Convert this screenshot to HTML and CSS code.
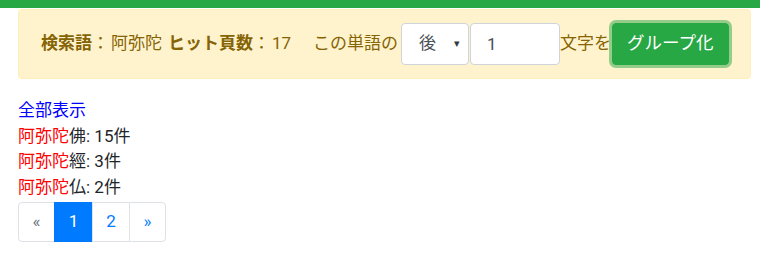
FILE: index.html
```html
<!DOCTYPE html>
<html lang="ja">
<head>
    <meta charset="UTF-8">
    <meta name="viewport" content="width=device-width, initial-scale=1.0">
    <title>検索結果</title>
    <link rel="stylesheet" href="styles.css">
</head>
<body>
    <div class="topbar"></div>

    <div class="container">
        <div class="alert">
            <b>検索語</b><span class="sep">：</span>阿弥陀
            <b class="gap-left">ヒット頁数</b><span class="sep">：</span>17
            <span class="phrase">この単語の</span>
            <div class="select">
                <span>後</span>
                <span class="caret">&#9662;</span>
            </div>
            <input class="input" type="text" value="1">
            <span>文字を</span>
            <button class="btn">グループ化</button>
        </div>

        <div class="results">
            <div><a class="all" href="#">全部表示</a></div>
            <div><span class="hit">阿弥陀</span>佛: 15件</div>
            <div><span class="hit">阿弥陀</span>經: 3件</div>
            <div><span class="hit">阿弥陀</span>仏: 2件</div>
        </div>

        <ul class="pagination">
            <li class="page disabled">&laquo;</li>
            <li class="page active">1</li>
            <li class="page">2</li>
            <li class="page">&raquo;</li>
        </ul>
    </div>
</body>
</html>
```

FILE: styles.css
```css
html
{
    font-size: 17px;
}

body
{
    margin: 0;
    font-family: Roboto, "Noto Sans CJK JP", sans-serif;
    font-size: 17px;
    line-height: 1.5;
    color: #212529;
    background: #fff;
}

.topbar
{
    height: 8px;
    background-color: #28a745;
}

.container
{
    padding: 0 9px 0 18px;
}

.alert
{
    margin-top: 1px;
    display: flex;
    align-items: center;
    height: 42px;
    padding: 13px 21px 13px 22px;
    background-color: #fff3cd;
    border: 1px solid #ffeeba;
    border-radius: 4px;
    color: #856404;
    white-space: nowrap;
}

.alert > *
{
    flex-shrink: 0;
}

.alert b
{
    font-weight: 700;
}

.alert .sep
{
    padding: 0 2px 0 0;
}

.gap-left
{
    margin-left: 6px;
}

.phrase
{
    margin-left: 22px;
}

.select
{
    box-sizing: border-box;
    display: flex;
    align-items: center;
    justify-content: space-between;
    width: 68px;
    height: 42px;
    margin-left: 3px;
    padding: 0 8px 0 17px;
    background: #fff;
    border: 1px solid #ced4da;
    border-radius: 4px;
    color: #495057;
}

.caret
{
    font-size: 11px;
    color: #343a40;
}

.input
{
    box-sizing: border-box;
    width: 90px;
    height: 42px;
    margin: 0 0 0 1px;
    padding: 0 16px;
    border: 1px solid #ced4da;
    border-radius: 4px;
    font-family: inherit;
    font-size: 17px;
    color: #495057;
}

.btn
{
    box-sizing: border-box;
    height: 42px;
    margin-left: 1px;
    padding: 0 14px;
    background-color: #28a745;
    border: 1px solid #28a745;
    border-radius: 4px;
    box-shadow: 0 0 0 3px rgba(40, 167, 69, .5);
    color: #fff;
    font-family: inherit;
    font-size: 17.5px;
    line-height: 1;
}

.results
{
    margin: 19px 0 2px;
    line-height: 25.5px;
}

.all
{
    color: #0000ff;
    text-decoration: none;
}

.hit
{
    color: #ff0000;
}

.pagination
{
    display: flex;
    margin: 0;
    padding: 0;
    list-style: none;
}

.page
{
    box-sizing: border-box;
    width: 38px;
    height: 40px;
    margin-left: -1px;
    display: flex;
    align-items: center;
    justify-content: center;
    border: 1px solid #dee2e6;
    color: #007bff;
    background: #fff;
}

.page:first-child
{
    margin-left: 0;
    width: 37px;
    border-radius: 4px 0 0 4px;
}

.page:last-child
{
    width: 37px;
    border-radius: 0 4px 4px 0;
}

.page.disabled
{
    color: #6c757d;
}

.page.active
{
    background-color: #007bff;
    border-color: #007bff;
    color: #fff;
    width: 39px;
}
```
